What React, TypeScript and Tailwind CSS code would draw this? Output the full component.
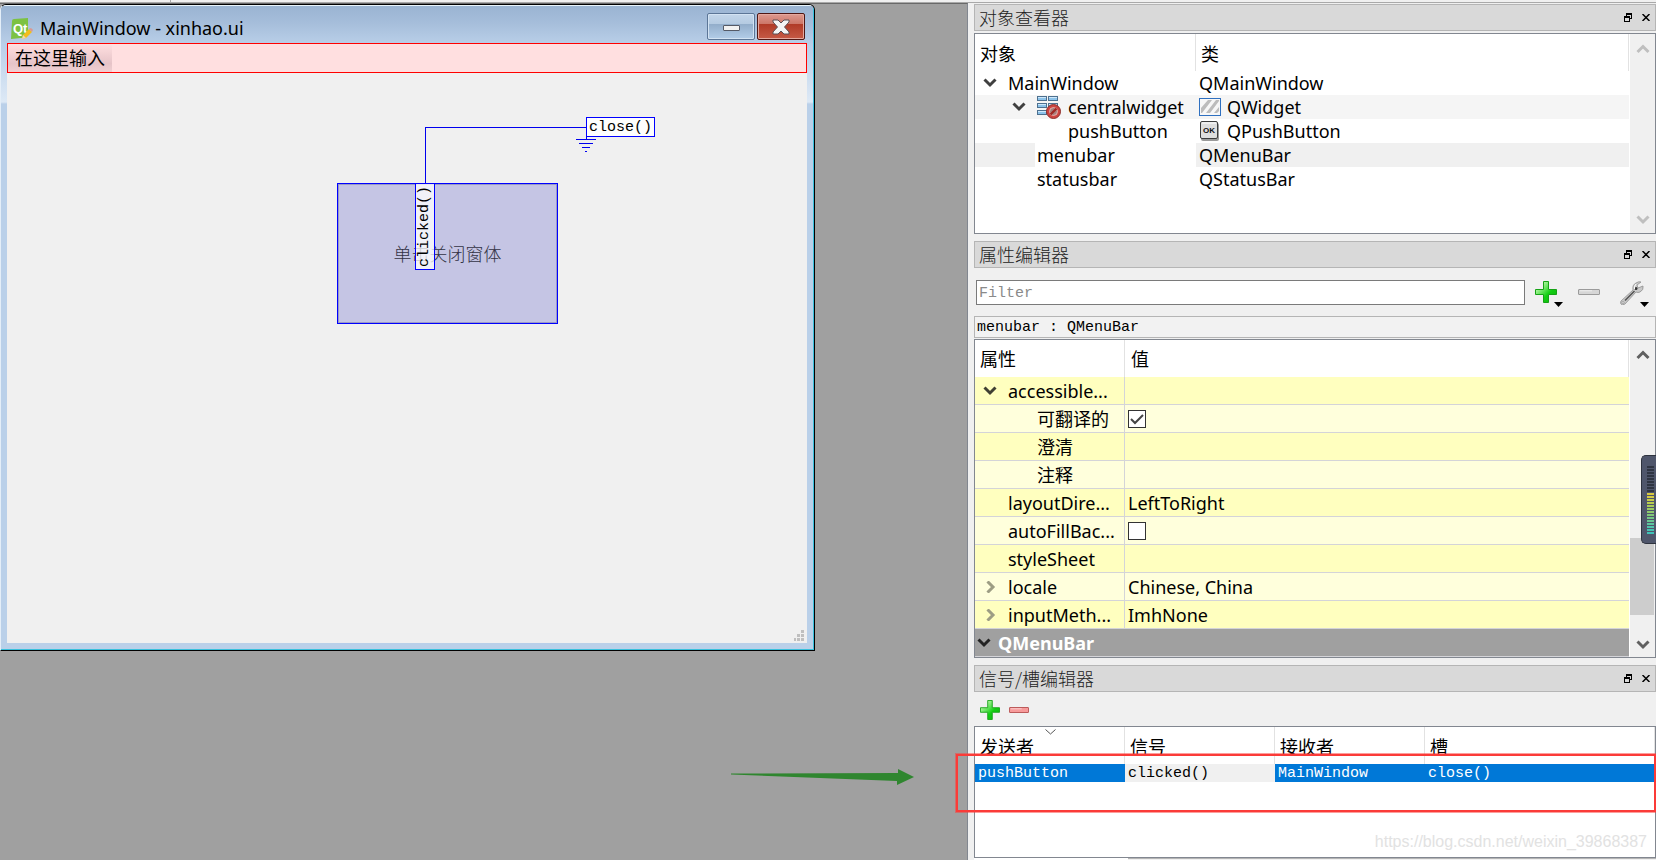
import { ReactNode, useState } from 'react'
import clsx from 'clsx'

const uiFont = "font-['Noto_Sans','Noto_Sans_CJK_SC',sans-serif]"
const monoFont = "font-['Liberation_Mono','Noto_Sans_CJK_SC',monospace]"
const songFont = "font-['Noto_Sans_CJK_SC',sans-serif] font-light"

function QtIcon() {
  return (
    <svg className="h-[22px] w-[22px] shrink-0" viewBox="0 0 22 22" aria-hidden="true">
      <path d="M1 3 Q1 1 3 1 L17 0 V14 Q16 20 10 20 L0 21 Z" fill="#7cc242" />
      <text x="2" y="15" fontSize="13" fontWeight="700" fill="#fff" fontFamily="'Liberation Sans Narrow', 'Liberation Sans', sans-serif">
        Qt
      </text>
      <path d="M11 21 L12 17 L18 11 L21 14 L15 20 Z" fill="#f2bd1c" />
      <path d="M18 11 L19 10 Q21 10 22 12 L21 14 Z" fill="#d99a94" />
      <path d="M11 21 L12 17 L15 20 Z" fill="#ecd9b0" />
    </svg>
  )
}

function PlusIcon({ className }: { className?: string }) {
  return (
    <svg className={className} viewBox="0 0 22 22" aria-hidden="true">
      <defs>
        <linearGradient id="plusFill" x1="0" y1="0" x2="1" y2="1">
          <stop offset="0.2" stopColor="#b4f7a4" />
          <stop offset="0.6" stopColor="#12cf12" />
          <stop offset="1" stopColor="#0fae0f" />
        </linearGradient>
      </defs>
      <path
        d="M8.5 0.5 H13.5 V8.5 H21.5 V13.5 H13.5 V21.5 H8.5 V13.5 H0.5 V8.5 H8.5 Z"
        fill="url(#plusFill)"
        stroke="#16a316"
        strokeLinejoin="round"
      />
    </svg>
  )
}

function MinusIcon({ red }: { red?: boolean }) {
  return (
    <svg className={red ? 'h-[6px] w-[20px]' : 'h-[6px] w-[22px]'} viewBox="0 0 22 6" preserveAspectRatio="none" aria-hidden="true">
      <rect x="0.5" y="0.5" width="21" height="5" rx="0.5" fill={red ? '#f79a9a' : '#d6d6d6'} stroke={red ? '#b95555' : '#9b9b9b'} />
      <path d="M2 1.8 H14" stroke={red ? '#fcd0d0' : '#efefef'} />
    </svg>
  )
}

function WrenchIcon() {
  return (
    <svg className="h-6 w-6" viewBox="0 0 24 24" aria-hidden="true">
      <path
        d="M1 20 L13 9 Q12 4 16 2 Q19 0 21 1 L17 4 L18 7 L23 5 Q24 9 20 11 Q18 12 16 11 L5 23 Q2 25 1 23 Q0 22 1 20 Z"
        fill="#c9c9c9"
        stroke="#8f8f8f"
        strokeWidth="0.8"
      />
      <path d="M5 19.500 L14.500 10" stroke="#555" strokeWidth="1.600" />
      <circle cx="16" cy="7.500" r="1.500" fill="#333" />
      <circle cx="3" cy="21.500" r="1" fill="#fff" stroke="#777" strokeWidth="0.6" />
      <path d="M16 3 Q14 5 14.500 8" stroke="#fff" fill="none" />
    </svg>
  )
}

function MenuArrow() {
  return (
    <svg className="absolute right-0 bottom-0 h-[5px] w-[9px]" viewBox="0 0 9 5" aria-hidden="true">
      <path d="M0 0 H9 L4.500 5 Z" fill="#000" />
    </svg>
  )
}

function Chevron({ dir, color, className }: { dir: 'up' | 'down' | 'right'; color: string; className?: string }) {
  const paths = { down: 'M1.500 2.500 L7 8 L12.500 2.500', up: 'M1.500 9 L7 3.500 L12.500 9', right: 'M4.500 0.500 L10 6 L4.500 11.500' }
  return (
    <svg className={clsx('h-3 w-[14px] shrink-0', className)} viewBox="0 0 14 12" aria-hidden="true">
      <path d={paths[dir]} fill="none" stroke={color} strokeWidth="3" />
    </svg>
  )
}

function LayoutIcon() {
  const boxes = [[0, 0], [11, 0], [0, 7], [11, 7], [0, 14]]
  return (
    <svg className="h-6 w-6 shrink-0" viewBox="0 0 24 24" aria-hidden="true">
      {boxes.map(([x, y]) => (
        <g key={`${x}-${y}`}>
          <rect x={x + 0.5} y={y + 1.5} width="9" height="4" fill="#8cc3ea" stroke="#4d708f" />
          <path d={`M${x + 1} ${y + 2.5} H${x + 9}`} stroke="#cfe8fa" />
        </g>
      ))}
      <circle cx="16.500" cy="16.500" r="7" fill="#ce4440" stroke="#8d2f2c" />
      <circle cx="16.500" cy="16.500" r="4" fill="#a87f7d" stroke="#f0bcb8" strokeWidth="0.8" />
      <path d="M13.500 19.500 L19.500 13.500" stroke="#a02824" strokeWidth="2.400" />
    </svg>
  )
}

function WidgetIcon() {
  return (
    <svg className="h-[18px] w-[22px] shrink-0" viewBox="0 0 22 18" aria-hidden="true">
      <rect x="0.500" y="0.500" width="21" height="17" fill="#f7f7f7" stroke="#2f70c0" />
      <path d="M2 10 L9 2 H13 L3 15 H2 Z M7 15 L17 2 H20 V3 L11 15 Z M15 15 L20 9 V13 L18 15 Z" fill="#bcbcbc" />
    </svg>
  )
}

function OkIcon() {
  return (
    <svg className="h-5 w-[22px] shrink-0" viewBox="0 0 22 20" aria-hidden="true">
      <rect x="2" y="2" width="18" height="18" rx="2" fill="#9a9a9a" />
      <rect x="1.500" y="0.500" width="17" height="17" rx="1.500" fill="#dedede" stroke="#3c3c3c" />
      <path d="M3 2 H17" stroke="#fff" />
      <text x="10" y="12" textAnchor="middle" fontSize="8" fontWeight="700" fill="#111" fontFamily="'Liberation Sans', sans-serif">
        OK
      </text>
    </svg>
  )
}

function DockTitle({ children }: { children: ReactNode }) {
  return (
    <div className="flex h-[27px] shrink-0 items-center border border-[#b5b5b5] bg-[#d9d9d9] pr-px pl-1">
      <h2 className={clsx('flex-1 pb-[2px] text-[18px] leading-6 text-[#222]', songFont)}>{children}</h2>
      <button className="flex h-4 w-4 items-center justify-center" aria-label="浮动">
        <svg className="h-[9px] w-2" viewBox="0 0 8 9" shapeRendering="crispEdges" aria-hidden="true">
          <path d="M2 0 H8 V6 H6 V5 H7 V2 H3 V3 H2 Z M0 3 H6 V9 H0 Z M1 5 V8 H5 V5 Z" fill="#000" fillRule="evenodd" />
        </svg>
      </button>
      <button className="ml-[2px] flex h-4 w-4 items-center justify-center" aria-label="关闭">
        <svg className="h-[7px] w-2" viewBox="0 0 8 7" aria-hidden="true">
          <path d="M0.500 0 L7.500 7 M7.500 0 L0.500 7" stroke="#000" strokeWidth="1.500" />
        </svg>
      </button>
    </div>
  )
}

function ScrollBar({ active }: { active?: boolean }) {
  const color = active ? '#606060' : '#bfbfbf'
  return (
    <div className="flex w-[26px] shrink-0 flex-col items-center border-l border-white bg-[#f0f0f0]">
      <button className="flex h-[30px] w-full items-center justify-center" aria-label="向上滚动">
        <Chevron dir="up" color={color} />
      </button>
      <div className="flex w-full flex-1 flex-col justify-end">{active && <div className="mr-px h-[77px] bg-[#cdcdcd]" />}</div>
      <button className={clsx('flex w-full items-center justify-center', active ? 'h-[42px] pt-[17px]' : 'h-[27px]')} aria-label="向下滚动">
        <Chevron dir="down" color={color} />
      </button>
    </div>
  )
}

function FormWindow() {
  return (
    <section className="relative w-[815px] overflow-hidden rounded-t-[6px] border border-black border-l-[#e4eef8] bg-[#bad0e9]">
      <div className="border-t border-r border-b border-t-[#e9f5fb] border-r-[#38c0dc] border-b-[#38c0dc] bg-[linear-gradient(#9ab4d2_0px,#a5bdda_16px,#b9cfe8_38px,#dde9f6_96px,#bad0e9_98px)] px-[6px] pb-[6px]">
        <header className="flex h-[37px] items-end pb-[3px] pl-1">
          <QtIcon />
          <h1 className={clsx('flex-1 pl-[7px] text-[18px] leading-6 text-black', uiFont)}>MainWindow - xinhao.ui</h1>
          <button
            className="mr-[2px] flex h-[27px] w-12 items-center justify-center rounded-[2px] border border-[#5c7697] bg-[linear-gradient(#c3d6ea_0,#b5cbe2_38%,#92adca_40%,#b3cde8_100%)] inset-ring inset-ring-[#d3e3f3]"
            aria-label="最小化"
          >
            <span className="mt-[3px] h-[6px] w-[17px] rounded-[1px] border border-[#555a66] bg-[#f1f1f1]" />
          </button>
          <button
            className="mr-[2px] flex h-[27px] w-12 items-center justify-center rounded-[2px] border border-[#4f1714] bg-[linear-gradient(#dd9a90_0,#cd7869_38%,#b03a26_40%,#c65a46_100%)] inset-ring inset-ring-[#e5a99f]"
            aria-label="关闭窗口"
          >
            <svg className="h-4 w-[18px]" viewBox="0 0 18 16" aria-hidden="true">
              <path
                d="M1 1 H6 L9 4 L12 1 H17 V3 L12.500 8 L17 13 V15 H12 L9 12 L6 15 H1 V13 L5.500 8 L1 3 Z"
                fill="#f4f4f4"
                stroke="#5b5056"
                strokeLinejoin="round"
              />
            </svg>
          </button>
        </header>
        <nav className="h-[30px] border border-[#ff0000] bg-[#ffdfe0]">
          <button
            className={clsx(
              'h-7 bg-[linear-gradient(#ffdfe0_0,#e6c4c8_70%,#f0d0d2_100%)] px-[7px] text-[18px] leading-6 text-black',
              uiFont
            )}
          >
            在这里输入
          </button>
        </nav>
        <div className="relative h-[570px] bg-[#f0f0f0]">
          <button
            className={clsx(
              'absolute top-[110px] left-[330px] h-[141px] w-[221px] border border-[#0000ff] bg-[#c5c5e4] text-[18px] text-[#333344] inset-ring inset-ring-[#9a9ac4]',
              songFont
            )}
          >
            单击关闭窗体
          </button>
          <svg className="absolute top-0 left-0 h-[120px] w-[620px]" viewBox="0 0 620 120" shapeRendering="crispEdges" aria-hidden="true">
            <path
              d="M418.500 110 V54.500 H579.500 V66 M569 66.500 H589 M572 70.500 H586 M575 74.500 H583 M578 78.500 H580"
              fill="none"
              stroke="#0000ee"
            />
          </svg>
          <span className={clsx('absolute top-[44px] left-[579px] h-5 w-[69px] border border-[#0000ff] bg-white/90 pt-px pl-[2px] text-[15px] leading-[18px] text-black', monoFont)}>
            close()
          </span>
          <span className={clsx('absolute top-[110px] left-[408px] h-[87px] w-5 rotate-180 border border-[#0000ff] bg-white/75 pt-[2px] text-[15px] leading-[18px] text-black [writing-mode:vertical-rl]', monoFont)}>
            clicked()
          </span>
          <svg className="absolute right-[3px] bottom-[2px] h-[11px] w-[10px]" viewBox="0 0 10 11" shapeRendering="crispEdges" aria-hidden="true">
            <path d="M7 0 H10 V3 H7 Z M7 4 H10 V7 H7 Z M7 8 H10 V11 H7 Z M3 4 H6 V7 H3 Z M3 8 H6 V11 H3 Z M0 8 H2 V11 H0 Z" fill="#bfbfbf" />
          </svg>
        </div>
      </div>
    </section>
  )
}

const objects = [
  { name: 'MainWindow', cls: 'QMainWindow', level: 0, open: true },
  { name: 'centralwidget', cls: 'QWidget', level: 1, open: true, icon: <LayoutIcon />, clsIcon: <WidgetIcon /> },
  { name: 'pushButton', cls: 'QPushButton', level: 2, clsIcon: <OkIcon /> },
  { name: 'menubar', cls: 'QMenuBar', level: 1, current: true },
  { name: 'statusbar', cls: 'QStatusBar', level: 1 }
]

const indents = ['pl-2', 'pl-[37px]', 'pl-[67px]']

function ObjectInspector() {
  return (
    <section>
      <DockTitle>对象查看器</DockTitle>
      <div className="mt-[2px] flex h-[201px] border border-[#828790] bg-white">
        <div className="flex-1">
          <table className={clsx('w-full table-fixed border-separate border-spacing-0 text-left text-[18px] leading-6 text-black', uiFont)}>
            <colgroup>
              <col className="w-[221px]" />
              <col />
            </colgroup>
            <thead>
              <tr className="h-[37px]">
                <th className="border-r border-[#e2e2e2] p-0 pt-[2px] pl-[5px] font-normal">对象</th>
                <th className="border-r border-[#e2e2e2] p-0 pt-[2px] pl-[5px] font-normal">类</th>
              </tr>
            </thead>
            <tbody>
              {objects.map((o) => (
                <tr key={o.name} className={clsx('h-6', o.name === 'centralwidget' && 'bg-[#f5f5f5]')}>
                  <td
                    className={clsx(
                      'p-0 whitespace-nowrap',
                      o.current && 'bg-[linear-gradient(90deg,#f0f0f0_60px,#fff_60px)]'
                    )}
                  >
                    <div className={clsx('flex h-6 items-center', indents[o.level])}>
                      <span className="flex w-[25px] shrink-0">{o.open && <Chevron dir="down" color="#404040" />}</span>
                      {o.icon}
                      <span className={o.icon ? 'pl-[7px]' : o.level === 2 ? 'pl-px' : ''}>{o.name}</span>
                    </div>
                  </td>
                  <td className={clsx('p-0', o.current && 'bg-[#f0f0f0]')}>
                    <div className="flex h-6 items-center gap-[6px] pl-[3px]">
                      {o.clsIcon}
                      {o.cls}
                    </div>
                  </td>
                </tr>
              ))}
            </tbody>
          </table>
        </div>
        <ScrollBar />
      </div>
    </section>
  )
}

const properties = [
  { name: 'accessible...', arrow: 'down' as const },
  { name: '可翻译的', child: true, checked: true },
  { name: '澄清', child: true },
  { name: '注释', child: true },
  { name: 'layoutDire...', value: 'LeftToRight' },
  { name: 'autoFillBac...', checked: false },
  { name: 'styleSheet' },
  { name: 'locale', arrow: 'right' as const, value: 'Chinese, China' },
  { name: 'inputMeth...', arrow: 'right' as const, value: 'ImhNone' }
]

function CheckBox({ label, initial }: { label: string; initial: boolean }) {
  const [checked, setChecked] = useState(initial)
  return (
    <label className="relative ml-[3px] block h-[18px] w-[18px]">
      <input
        type="checkbox"
        aria-label={label}
        checked={checked}
        onChange={(e) => setChecked(e.target.checked)}
        className="block h-[18px] w-[18px] appearance-none border border-[#333] bg-white"
      />
      {checked && (
        <svg className="pointer-events-none absolute top-0 left-0 h-[18px] w-[18px]" viewBox="0 0 18 18" aria-hidden="true">
          <path d="M3 9 L7 13 L15 5" fill="none" stroke="#444" strokeWidth="2" />
        </svg>
      )}
    </label>
  )
}

function PropertyEditor() {
  return (
    <section className="mt-[7px]">
      <DockTitle>属性编辑器</DockTitle>
      <div className="flex h-12 items-center pr-[7px] pl-[2px]">
        <input
          aria-label="Filter"
          placeholder="Filter"
          className={clsx('h-[25px] min-w-0 flex-1 border border-[#7a7a7a] bg-white pt-[2px] pl-[2px] text-[15px] placeholder:text-[#8a8a8a]', monoFont)}
        />
        <button className="relative mt-[3px] ml-[10px] flex h-[26px] w-7 items-start" aria-label="添加属性">
          <PlusIcon className="h-[22px] w-[22px]" />
          <MenuArrow />
        </button>
        <button className="mt-[3px] ml-[15px] flex h-[26px] w-[22px] items-center pb-1" aria-label="删除属性">
          <MinusIcon />
        </button>
        <button className="relative mt-[3px] ml-5 flex h-[26px] w-[29px] items-start" aria-label="配置">
          <WrenchIcon />
          <MenuArrow />
        </button>
      </div>
      <div className={clsx('h-[22px] border border-[#b5b5b5] bg-[#f2f2f2] pt-px pl-[2px] text-[15px] leading-5 text-black', monoFont)}>
        menubar : QMenuBar
      </div>
      <div className="mt-px flex border border-[#828790] bg-white">
        <div className="flex-1">
          <table className={clsx('w-full table-fixed border-separate border-spacing-0 text-left text-[18px] leading-6 text-black', uiFont)}>
            <colgroup>
              <col className="w-[150px]" />
              <col />
            </colgroup>
            <thead>
              <tr className="h-[37px]">
                <th className="border-r border-[#e2e2e2] p-0 pl-[5px] font-normal">属性</th>
                <th className="border-r border-[#e2e2e2] p-0 pl-[6px] font-normal">值</th>
              </tr>
            </thead>
            <tbody>
              {properties.map((p) => (
                <tr key={p.name} className="h-7 odd:bg-[#ffffbf] even:bg-[#ffffdc]">
                  <td className="border-r border-b border-[#d4d4d8] p-0 whitespace-nowrap">
                    <div className={clsx('flex items-center', p.child ? 'pl-[37px]' : 'pl-2')}>
                      <span className="flex w-[25px] shrink-0">
                        {p.arrow && <Chevron dir={p.arrow} color={p.arrow === 'down' ? '#404033' : '#9d9d84'} />}
                      </span>
                      {p.name}
                    </div>
                  </td>
                  <td className="border-b border-[#d4d4d8] p-0 pl-[3px]">
                    {p.checked !== undefined ? (
                      <div className="-ml-[3px]">
                        <CheckBox label={p.name} initial={p.checked} />
                      </div>
                    ) : (
                      p.value
                    )}
                  </td>
                </tr>
              ))}
              <tr className="h-7 bg-[#a0a0a0] text-white">
                <td colSpan={2} className="border-b border-[#d4d4d8] p-0 font-bold">
                  <div className="flex items-center pl-[2px]">
                    <Chevron dir="down" color="#222" />
                    <span className="pl-[7px]">QMenuBar</span>
                  </div>
                </td>
              </tr>
            </tbody>
          </table>
        </div>
        <ScrollBar active />
      </div>
    </section>
  )
}

function SignalSlotEditor() {
  return (
    <section className="mt-[7px] flex flex-1 flex-col">
      <DockTitle>信号/槽编辑器</DockTitle>
      <div className="flex h-[34px] items-center gap-[9px] pt-[2px] pl-[6px]">
        <button aria-label="添加连接">
          <PlusIcon className="h-5 w-5" />
        </button>
        <button className="flex h-5 w-5 items-center" aria-label="删除连接">
          <MinusIcon red />
        </button>
      </div>
      <div className="flex-1 border border-[#828790] bg-white">
        <table className="w-full table-fixed border-separate border-spacing-0 text-left text-black">
          <colgroup>
            <col className="w-[150px]" />
            <col className="w-[150px]" />
            <col className="w-[150px]" />
            <col />
          </colgroup>
          <thead className={clsx('text-[18px] leading-6', uiFont)}>
            <tr className="h-[37px]">
              <th className="relative border-r border-[#e2e2e2] p-0 pt-[2px] pl-[5px] font-normal">
                发送者
                <svg className="absolute top-[2px] left-[70px] h-[6px] w-[11px]" viewBox="0 0 11 6" aria-hidden="true">
                  <path d="M0.500 0.500 L5.500 5 L10.500 0.500" fill="none" stroke="#555" />
                </svg>
              </th>
              <th className="border-r border-[#e2e2e2] p-0 pt-[2px] pl-[5px] font-normal">信号</th>
              <th className="border-r border-[#e2e2e2] p-0 pt-[2px] pl-[5px] font-normal">接收者</th>
              <th className="border-r border-[#e2e2e2] p-0 pt-[2px] pl-[5px] font-normal">槽</th>
            </tr>
          </thead>
          <tbody className={clsx('text-[15px] leading-4', monoFont)}>
            <tr className="h-[18px] bg-[#0078d7] text-white">
              <td className="p-0 pt-[2px] pl-[3px]">pushButton</td>
              <td className="bg-[#f0f0f0] p-0 pt-[2px] pl-[3px] text-black">clicked()</td>
              <td className="p-0 pt-[2px] pl-[3px]">MainWindow</td>
              <td className="p-0 pt-[2px] pl-[3px]">close()</td>
            </tr>
          </tbody>
        </table>
      </div>
      <div className="flex h-[2px]">
        <div className="w-[154px] bg-white" />
        <div className="flex-1 border-b border-[#f0f0f0] bg-[#b5b5b5]" />
      </div>
    </section>
  )
}

const meterColors = [
  'bg-[#d9c840]', 'bg-[#d3cb44]', 'bg-[#c6cc48]', 'bg-[#b9cd4e]', 'bg-[#a9cc58]', 'bg-[#9ccb62]', 'bg-[#8fca6c]',
  'bg-[#81c878]', 'bg-[#74c784]', 'bg-[#68c692]', 'bg-[#5cc59e]', 'bg-[#50c4aa]', 'bg-[#46c3b2]', 'bg-[#3fc2b8]'
]

function LevelMeter() {
  return (
    <aside className="absolute top-[455px] right-0 flex h-[89px] w-[15px] flex-col gap-px rounded-l-[5px] border border-r-0 border-[#2e333e] bg-[#4f566b] pt-[10px] pl-[5px]">
      {Array.from({ length: 9 }, (_, i) => (
        <span key={i} className="h-[2px] w-[7px] bg-[#2f3542]" />
      ))}
      {meterColors.map((c) => (
        <span key={c} className={clsx('h-[2px] w-[7px]', c)} />
      ))}
    </aside>
  )
}

export default function App() {
  return (
    <div className="relative flex h-screen flex-col overflow-hidden bg-[#f0f0f0]">
      <div className="flex h-[3px] shrink-0 border-b border-[#a9a9a9]">
        <div className="w-[171px] border-r border-[#a9a9a9]" />
      </div>
      <div className="flex min-h-0 flex-1">
        <main className="min-w-0 flex-1 border-t border-r border-t-[#696969] border-r-[#828790] bg-[#a0a0a0]">
          <FormWindow />
        </main>
        <div className="flex w-[688px] shrink-0 flex-col pt-px pl-[6px]">
          <ObjectInspector />
          <PropertyEditor />
          <SignalSlotEditor />
        </div>
      </div>

      {/* annotations over the window */}
      <svg className="pointer-events-none absolute right-[742px] bottom-[74px] h-[18px] w-[183px]" viewBox="0 0 183 18" aria-hidden="true">
        <path d="M0 5.500 L167 5 V1 L183 9 L166 17 V13 L0 6.500 Z" fill="#2f862f" />
      </svg>
      <div className="pointer-events-none absolute right-0 bottom-12 h-[58px] w-[700px] border-2 border-[#fb3b38] ring ring-[#fb3b38]/50" />
      <a
        href="https://blog.csdn.net/weixin_39868387"
        className="absolute right-[9px] bottom-2 font-['Liberation_Sans',sans-serif] text-[16px] leading-5 text-[#e2e2e2]"
      >
        https://blog.csdn.net/weixin_39868387
      </a>
      <LevelMeter />
    </div>
  )
}
